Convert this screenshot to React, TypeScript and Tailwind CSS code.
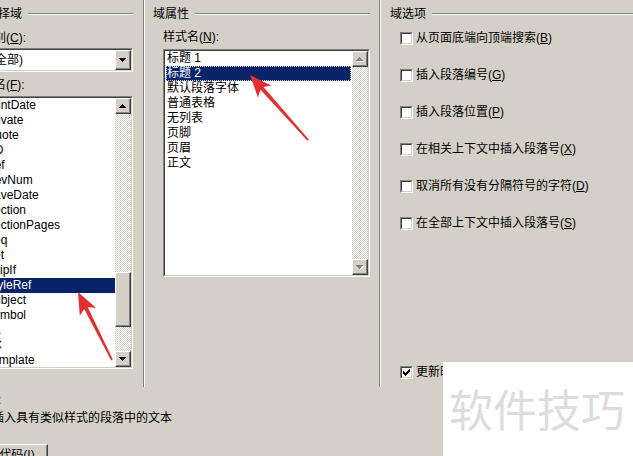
import React from "react";

const FONT = "font-['Liberation_Sans','Noto_Sans_CJK_SC',sans-serif]";

function GroupHeader({ label }: { label: string }) {
  return (
    <div className="flex items-center h-[16px]">
      <span className="whitespace-nowrap">{label}</span>
      <div className="flex-1 ml-[6px] h-[2px] border-t border-t-[#808080] border-b border-b-white" />
    </div>
  );
}

function Arrow({ dir, disabled }: { dir: "up" | "down"; disabled?: boolean }) {
  const rows = dir === "up" ? [[3, 1], [2, 3], [1, 5], [0, 7]] : [[0, 7], [1, 5], [2, 3], [3, 1]];
  return (
    <svg width="8" height="5" viewBox="0 0 8 5" shapeRendering="crispEdges">
      {disabled &&
        rows.map(([x, w], i) => <rect key={"s" + i} x={x + 1} y={i + 1} width={w} height={1} fill="#ffffff" />)}
      {rows.map(([x, w], i) => (
        <rect key={i} x={x} y={i} width={w} height={1} fill={disabled ? "#808080" : "#000000"} />
      ))}
    </svg>
  );
}

function ScrollBtn({ dir, disabled }: { dir: "up" | "down"; disabled?: boolean }) {
  return (
    <div className="w-[16px] h-[16px] shrink-0 bg-[#d4d0c8] border border-t-white border-l-white border-r-[#404040] border-b-[#404040] shadow-[inset_-1px_-1px_0_#808080] flex items-center justify-center">
      <Arrow dir={dir} disabled={disabled} />
    </div>
  );
}

function Sunken({ className, children }: { className?: string; children: React.ReactNode }) {
  return (
    <div className={"border border-t-[#808080] border-l-[#808080] border-r-white border-b-white " + (className ?? "")}>
      <div className="w-full h-full border border-t-[#404040] border-l-[#404040] border-r-[#d4d0c8] border-b-[#d4d0c8] bg-white flex overflow-hidden">
        {children}
      </div>
    </div>
  );
}

function CheckBox({ checked }: { checked?: boolean }) {
  const rows: number[][] = [[6], [5, 6], [0, 4, 5, 6], [0, 1, 3, 4, 5], [0, 1, 2, 3, 4], [1, 2, 3], [2]];
  return (
    <div className="w-[13px] h-[13px] shrink-0 border border-t-[#808080] border-l-[#808080] border-r-white border-b-white">
      <div className="w-full h-full border border-t-[#404040] border-l-[#404040] border-r-[#d4d0c8] border-b-[#d4d0c8] bg-white flex items-center justify-center">
        {checked && (
          <svg width="7" height="7" viewBox="0 0 7 7" shapeRendering="crispEdges">
            {rows.map((xs, y) => xs.map((x) => <rect key={y + "-" + x} x={x} y={y} width={1} height={1} fill="#000" />))}
          </svg>
        )}
      </div>
    </div>
  );
}

function Opt({
  label,
  acc,
  checked,
  className,
  textClass,
}: {
  label: string;
  acc: string;
  checked?: boolean;
  className?: string;
  textClass?: string;
}) {
  return (
    <div className={"flex items-center h-[16px] ml-[10px] " + (className ?? "")}>
      <CheckBox checked={checked} />
      <span className={"ml-[3px] whitespace-nowrap " + (textClass ?? "")}>
        {label}(<u>{acc}</u>)
      </span>
    </div>
  );
}

const fieldNames = [
  "PrintDate",
  "Private",
  "Quote",
  "RD",
  "Ref",
  "RevNum",
  "SaveDate",
  "Section",
  "SectionPages",
  "Seq",
  "Set",
  "SkipIf",
  "StyleRef",
  "Subject",
  "Symbol",
  "TA",
  "TC",
  "Template",
];

const styleNames = ["标题 1", "标题 2", "默认段落字体", "普通表格", "无列表", "页脚", "页眉", "正文"];

export default function App() {
  return (
    <div className={"relative w-[633px] h-[456px] overflow-hidden bg-[#d4d0c8] text-black text-[12px] leading-[15px] " + FONT}>
      {/* top area */}
      <div className="flex h-[387px]">
        {/* left column */}
        <div className="ml-[-26px] w-[159px] shrink-0 pt-[6px] flex flex-col">
          <GroupHeader label="请选择域" />
          <div className="ml-[8px] flex flex-col">
            <div className="mt-[8px] h-[16px] flex items-center whitespace-nowrap">
              类别(<u>C</u>):
            </div>
            <Sunken className="mt-[2px] h-[24px] w-[151px]">
              <div className="flex-1 flex items-center pl-[7px] whitespace-nowrap">(全部)</div>
              <div className="w-[16px] h-full shrink-0 bg-[#d4d0c8] border border-t-white border-l-white border-r-[#404040] border-b-[#404040] shadow-[inset_-1px_-1px_0_#808080] flex items-center justify-center">
                <Arrow dir="down" />
              </div>
            </Sunken>
            <div className="mt-[5px] h-[16px] flex items-center whitespace-nowrap">
              域名(<u>F</u>):
            </div>
            <Sunken className="mt-[3px] h-[273px] w-[151px]">
              <div className="flex-1 flex flex-col min-w-0">
                {fieldNames.map((n) => (
                  <div
                    key={n}
                    className={
                      "h-[15px] shrink-0 pl-[2px] flex items-center whitespace-nowrap " +
                      (n === "StyleRef" ? "bg-[#0a246a] text-white" : "")
                    }
                  >
                    {n}
                  </div>
                ))}
              </div>
              <div className="w-[16px] shrink-0 flex flex-col bg-[repeating-conic-gradient(#d4d0c8_0_25%,#ffffff_0_50%)] bg-[length:2px_2px]">
                <ScrollBtn dir="up" />
                <div className="flex-1 flex flex-col">
                  <div className="mt-[158px] h-[55px] bg-[#d4d0c8] border border-t-white border-l-white border-r-[#404040] border-b-[#404040] shadow-[inset_-1px_-1px_0_#808080]" />
                </div>
                <ScrollBtn dir="down" />
              </div>
            </Sunken>
          </div>
        </div>

        {/* separator */}
        <div className="ml-[10px] w-[2px] shrink-0 border-l border-l-[#808080] border-r border-r-white" />

        {/* middle column */}
        <div className="ml-[8px] w-[217px] shrink-0 pt-[6px] flex flex-col">
          <GroupHeader label="域属性" />
          <div className="ml-[10px] flex flex-col">
            <div className="mt-[7px] h-[16px] flex items-center whitespace-nowrap">
              样式名(<u>N</u>):
            </div>
            <Sunken className="mt-[4px] h-[228px] w-[207px]">
              <div className="flex-1 flex flex-col min-w-0 px-[1px]">
                {styleNames.map((n, i) => (
                  <div
                    key={n}
                    className={
                      "h-[15px] shrink-0 pl-[1px] flex items-center whitespace-nowrap " +
                      (i === 1 ? "bg-[#0a246a] text-white outline-1 outline-dotted outline-[#d4d0c8] -outline-offset-1" : "")
                    }
                  >
                    {n}
                  </div>
                ))}
              </div>
              <div className="w-[16px] shrink-0 flex flex-col justify-between bg-[repeating-conic-gradient(#d4d0c8_0_25%,#ffffff_0_50%)] bg-[length:2px_2px]">
                <ScrollBtn dir="up" disabled />
                <ScrollBtn dir="down" disabled />
              </div>
            </Sunken>
          </div>
        </div>

        {/* separator */}
        <div className="ml-[9px] w-[2px] shrink-0 border-l border-l-[#808080] border-r border-r-white" />

        {/* right column */}
        <div className="ml-[9px] flex-1 pt-[6px] flex flex-col">
          <GroupHeader label="域选项" />
          <div className="mt-[8px] flex flex-col gap-[21px]">
            <Opt label="从页面底端向顶端搜索" acc="B" />
            <Opt label="插入段落编号" acc="G" />
            <Opt label="插入段落位置" acc="P" />
            <Opt label="在相关上下文中插入段落号" acc="X" />
            <Opt label="取消所有没有分隔符号的字符" acc="D" />
            <Opt label="在全部上下文中插入段落号" acc="S" />
          </div>
          <Opt
            label="更新时保留原格式"
            acc="V"
            checked
            className="mt-[133px]"
            textClass="max-w-[27px] overflow-hidden"
          />
        </div>
      </div>

      {/* bottom area */}
      <div className="ml-[-26px] flex flex-col">
        <div className="mt-[5px] h-[16px] flex items-center whitespace-nowrap">说明:</div>
        <div className="mt-[2px] ml-[18px] h-[16px] flex items-center whitespace-nowrap">
          插入具有类似样式的段落中的文本
        </div>
        <div className="mt-[18px] w-[74px] h-[23px] bg-[#d4d0c8] border border-t-white border-l-white border-r-[#404040] border-b-[#404040] shadow-[inset_-1px_-1px_0_#808080] flex items-center justify-center whitespace-nowrap">
          域代码(<u>I</u>)
        </div>
      </div>

      {/* watermark overlay */}
      <div className="absolute left-[443px] top-[362px] right-0 bottom-0 bg-white pl-[6px] pt-[22px]">
        <div className="text-[44px] leading-[48px] text-[#dddddd] whitespace-nowrap font-['Noto_Sans_CJK_SC',sans-serif]">
          软件技巧
        </div>
      </div>

      {/* red annotation arrows */}
      <svg className="absolute left-0 top-0 pointer-events-none" width="633" height="456" viewBox="0 0 633 456">
        <polygon
          points="250,75 271.4,85.4 263.5,87.1 308.8,139.4 307.2,140.6 260.5,89.7 257.9,97.4"
          fill="#e23030"
        />
        <polygon
          points="78,292 95.9,307.7 87.8,307.2 112.8,359.6 111.2,360.4 84.2,309 79.8,315.7"
          fill="#e23030"
        />
      </svg>
    </div>
  );
}
